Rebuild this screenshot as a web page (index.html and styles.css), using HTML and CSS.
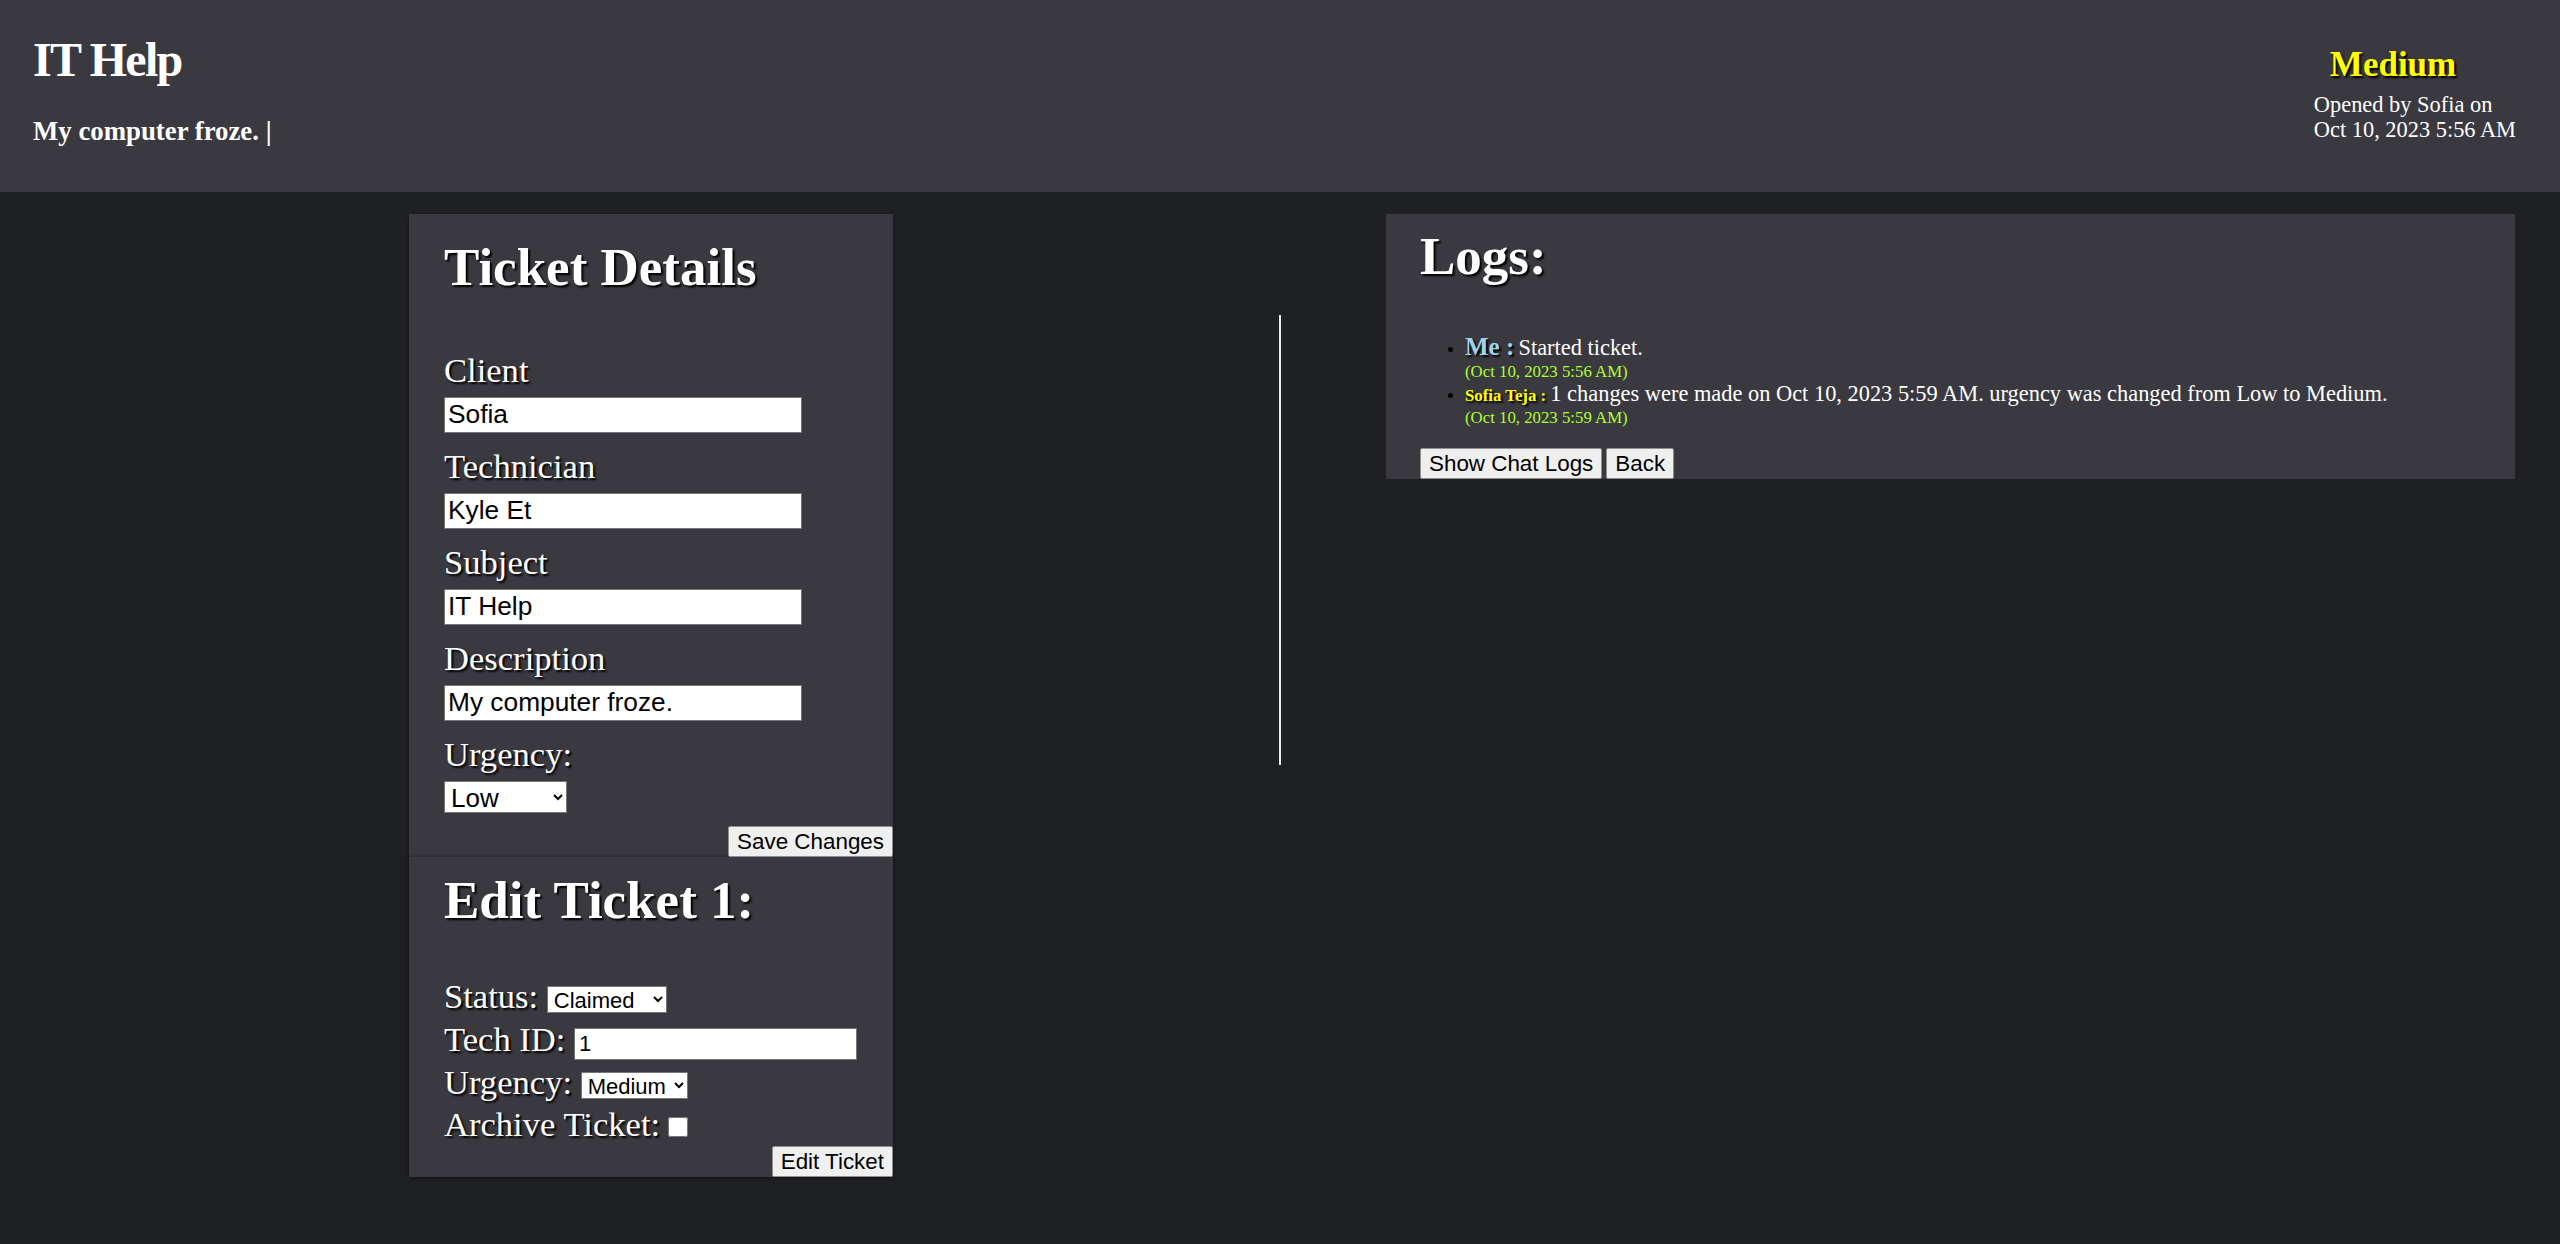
FILE: index.html
```html
<!DOCTYPE html>
<html lang="en">
<head>
<meta charset="utf-8">
<title>IT Help</title>
<link rel="stylesheet" href="styles.css">
</head>
<body>
<header class="top">
  <div class="top-left">
    <h1 class="title">IT Help</h1>
    <p class="subtitle">My computer froze. |</p>
  </div>
  <div class="top-right">
    <div class="badge">Medium</div>
    <div class="opened">Opened by Sofia on<br>Oct 10, 2023 5:56 AM</div>
  </div>
</header>

<main class="main">
  <section class="left-col">
    <div class="card details">
      <h2 class="card-title">Ticket Details</h2>
      <div class="fields">
        <div class="field">
          <label class="lbl">Client</label>
          <input class="txt" type="text" value="Sofia">
        </div>
        <div class="field">
          <label class="lbl">Technician</label>
          <input class="txt" type="text" value="Kyle Et">
        </div>
        <div class="field">
          <label class="lbl">Subject</label>
          <input class="txt" type="text" value="IT Help">
        </div>
        <div class="field">
          <label class="lbl">Description</label>
          <input class="txt" type="text" value="My computer froze.">
        </div>
        <div class="field field-last">
          <label class="lbl">Urgency:</label>
          <select class="sel sel-big">
            <option selected>Low</option>
            <option>Medium</option>
            <option>High</option>
          </select>
        </div>
      </div>
      <div class="actions"><button class="btn">Save Changes</button></div>
    </div>

    <div class="card edit">
      <h2 class="card-title">Edit Ticket 1:</h2>
      <div class="rows">
        <div class="row">Status: <select class="sel sel-status"><option>Open</option><option selected>Claimed</option><option>Resolved</option></select></div>
        <div class="row">Tech ID: <input class="txt-small" type="text" value="1"></div>
        <div class="row">Urgency: <select class="sel sel-urg"><option>Low</option><option selected>Medium</option><option>High</option></select></div>
        <div class="row">Archive Ticket:<input class="chk" type="checkbox"></div>
      </div>
      <div class="actions"><button class="btn">Edit Ticket</button></div>
    </div>
  </section>

  <div class="divider"></div>

  <section class="card logs">
    <h2 class="card-title">Logs:</h2>
    <ul class="log-list">
      <li class="log-item">
        <div class="log-line"><span class="who who-me">Me :</span> <span class="msg">Started ticket.</span></div>
        <div class="when">(Oct 10, 2023 5:56 AM)</div>
      </li>
      <li class="log-item">
        <div class="log-line"><span class="who who-tech">Sofia Teja :</span> <span class="msg">1 changes were made on Oct 10, 2023 5:59 AM. urgency was changed from Low to Medium.</span></div>
        <div class="when">(Oct 10, 2023 5:59 AM)</div>
      </li>
    </ul>
    <div class="log-actions"><button class="btn">Show Chat Logs</button> <button class="btn">Back</button></div>
  </section>
</main>
</body>
</html>
```

FILE: styles.css
```css
html, body {
  margin: 0;
  padding: 0;
}

body {
  background: #1f2023;
  color: #ffffff;
  font-family: "Liberation Serif", "Times New Roman", serif;
  min-height: 100vh;
}

/* ---------- header ---------- */
.top {
  display: flex;
  justify-content: space-between;
  align-items: flex-start;
  box-sizing: border-box;
  height: 192px;
  padding: 34px 44px 0 33px;
  background: #3a393f;
}

.title {
  margin: 0;
  font-size: 48px;
  line-height: 52px;
  font-weight: bold;
  letter-spacing: -1.7px;
}

.subtitle {
  margin: 30px 0 0 0;
  font-size: 26.8px;
  line-height: 30.5px;
  font-weight: bold;
}

.top-right {
  padding-top: 10.7px;
}

.badge {
  padding-left: 16px;
  font-size: 35px;
  line-height: 40px;
  font-weight: bold;
  color: #ffff00;
  text-shadow: 2px 2px 2px #000;
}

.opened {
  margin-top: 8.8px;
  font-size: 22.4px;
  line-height: 24.6px;
}

/* ---------- main layout ---------- */
.main {
  display: flex;
  align-items: flex-start;
  padding: 22px 45px 0 409px;
}

.left-col {
  width: 484px;
  flex: none;
}

.divider {
  flex: none;
  width: 2px;
  height: 450px;
  margin: 101px 0 0 386px;
  background: #ececec;
}

.card {
  background: #3a393f;
  box-sizing: border-box;
}

.card-title {
  margin: 0;
  font-size: 53px;
  line-height: 61px;
  font-weight: bold;
  text-shadow: 2px 2px 2px #000;
}

/* ---------- ticket details ---------- */
.details {
  padding: 22.6px 0 0 35px;
  box-shadow: 0 1px 3px rgba(0, 0, 0, 0.4);
}

.fields {
  margin-top: 52.7px;
}

.field {
  display: flex;
  flex-direction: column;
  align-items: flex-start;
  margin-bottom: 13.3px;
}

.field-last {
  margin-bottom: 13px;
}

.lbl {
  display: block;
  font-size: 34.6px;
  line-height: 40px;
  text-shadow: 2px 2px 2px #000;
}

.txt {
  margin-top: 6.7px;
  box-sizing: border-box;
  width: 358px;
  height: 36px;
  padding: 0 3px;
  border: 1px solid #767676;
  border-radius: 0;
  background: #fff;
  color: #000;
  font-family: "Liberation Sans", Arial, sans-serif;
  font-size: 26.3px;
}

.sel {
  box-sizing: border-box;
  border: 1px solid #767676;
  border-radius: 0;
  background-color: #fff;
  color: #000;
  font-family: "Liberation Sans", Arial, sans-serif;
  padding: 0 0 0 2px;
  margin: 0;
}

.sel-big {
  margin-top: 7px;
  width: 123px;
  height: 32px;
  font-size: 26px;
}

.actions {
  display: flex;
  justify-content: flex-end;
}

.btn {
  box-sizing: border-box;
  height: 31px;
  padding: 0 8px;
  margin: 0;
  background: #efefef;
  color: #000;
  border: 1px solid #8f8f8f;
  border-radius: 2px;
  font-family: "Liberation Sans", Arial, sans-serif;
  font-size: 22.4px;
  line-height: 29px;
}

/* ---------- edit ticket ---------- */
.edit {
  padding: 12.6px 0 0 35px;
  box-shadow: 0 -1px 3px rgba(0, 0, 0, 0.25), 0 1px 3px rgba(0, 0, 0, 0.4);
}

.rows {
  margin-top: 44.4px;
}

.row {
  font-size: 34.6px;
  line-height: 42.7px;
  height: 42.7px;
  text-shadow: 2px 2px 2px #000;
  white-space: nowrap;
}

.row .sel,
.row .txt-small {
  text-shadow: none;
  vertical-align: baseline;
}

.sel-status {
  width: 120px;
  height: 27px;
  font-size: 22px;
}

.sel-urg {
  width: 107px;
  height: 27px;
  font-size: 22px;
}

.txt-small {
  box-sizing: border-box;
  width: 283px;
  height: 32px;
  padding: 0 4px;
  margin: 0;
  border: 1px solid #767676;
  border-radius: 0;
  background: #fff;
  color: #000;
  font-family: "Liberation Sans", Arial, sans-serif;
  font-size: 22px;
}

.chk {
  width: 20px;
  height: 20px;
  margin: 0 0 0 8px;
  vertical-align: -1px;
}

/* ---------- logs ---------- */
.logs {
  flex: 1;
  margin-left: 105px;
  padding: 11.6px 0 0 34px;
}

.log-list {
  margin: 48px 0 0 0;
  padding: 0 0 0 45px;
  font-size: 16.8px;
  color: #000;
}

.log-item::marker {
  color: #000;
}

.log-line {
  line-height: 24px;
}

.who {
  font-weight: bold;
  text-shadow: 2px 2px 2px #000;
}

.who-me {
  font-size: 25px;
  color: #9fd3ec;
}

.who-tech {
  font-size: 16.8px;
  color: #ffff00;
}

.msg {
  font-size: 22.4px;
  color: #fff;
}

.when {
  font-size: 16.8px;
  line-height: 20px;
  color: #adff2f;
}

.log-actions {
  margin-top: 20px;
  height: 31px;
}
```
